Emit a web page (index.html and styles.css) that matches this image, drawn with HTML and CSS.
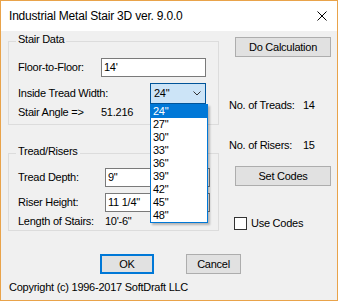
FILE: index.html
```html
<!DOCTYPE html>
<html lang="en">
<head>
    <meta charset="UTF-8">
    <title>Industrial Metal Stair 3D ver. 9.0.0</title>
    <link rel="stylesheet" href="styles.css">
</head>
<body>

    <div class="window">
        <div class="titlebar">
            <span class="title">Industrial Metal Stair 3D ver. 9.0.0</span>
            <svg class="close" width="10" height="10" viewBox="0 0 10 10">
                <path d="M0.5 0.5 L9.5 9.5 M9.5 0.5 L0.5 9.5" stroke="#000" stroke-width="1" fill="none"/>
            </svg>
        </div>

        <div class="client">
            <div class="main">
                <!-- left column start -->
                <div class="left">
                    <fieldset class="group group-stair">
                        <legend>Stair Data</legend>
                        <div class="row row-field">
                            <span class="lbl lbl-a">Floor-to-Floor:</span>
                            <div class="field field-a">14'</div>
                        </div>
                        <div class="row row-combo">
                            <span class="lbl lbl-wide">Inside Tread Width:</span>
                            <div class="combo">
                                <span class="combo-value">24"</span>
                                <svg class="chevron" width="8" height="5" viewBox="0 0 8 5">
                                    <polyline points="0.5,0.5 4,4 7.5,0.5" fill="none" stroke="#333" stroke-width="1"/>
                                </svg>
                                <ul class="combo-list">
                                    <li class="selected">24"</li>
                                    <li>27"</li>
                                    <li>30"</li>
                                    <li>33"</li>
                                    <li>36"</li>
                                    <li>39"</li>
                                    <li>42"</li>
                                    <li>45"</li>
                                    <li>48"</li>
                                </ul>
                            </div>
                        </div>
                        <div class="row row-text">
                            <span class="lbl lbl-a">Stair Angle =&gt;</span>
                            <span>51.216</span>
                        </div>
                    </fieldset>

                    <fieldset class="group group-tread">
                        <legend>Tread/Risers</legend>
                        <div class="row row-field">
                            <span class="lbl lbl-b">Tread Depth:</span>
                            <div class="field field-b">9"</div>
                        </div>
                        <div class="row row-field">
                            <span class="lbl lbl-b">Riser Height:</span>
                            <div class="field field-b">11 1/4"</div>
                        </div>
                        <div class="row row-length">
                            <span class="lbl lbl-b">Length of Stairs:</span>
                            <span>10'-6"</span>
                        </div>
                    </fieldset>
                </div>
                <!-- left column end -->

                <!-- right column start -->
                <div class="right">
                    <button class="btn btn-side">Do Calculation</button>
                    <div class="count count-treads"><span class="count-lbl">No. of Treads:</span><span>14</span></div>
                    <div class="count count-risers"><span class="count-lbl">No. of Risers:</span><span>15</span></div>
                    <button class="btn btn-side btn-codes">Set Codes</button>
                    <label class="check">
                        <span class="box"></span>
                        <span>Use Codes</span>
                    </label>
                </div>
                <!-- right column end -->
            </div>

            <div class="actions">
                <button class="btn btn-ok">OK</button>
                <button class="btn btn-cancel">Cancel</button>
            </div>

            <div class="copyright">Copyright (c) 1996-2017 SoftDraft LLC</div>
        </div>
    </div>

</body>
</html>
```

FILE: styles.css
```css
body {
    margin: 0;
    padding: 0;
    font-family: "Liberation Sans", Arial, sans-serif;
    font-size: 11px;
    color: #000;
    background: #f0f0f0;
}

.window {
    width: 338px;
    height: 301px;
    box-sizing: border-box;
    border: 1px solid #e9a34a;
    display: flex;
    flex-direction: column;
    background: #f0f0f0;
}

.titlebar {
    height: 30px;
    background: #fff;
    display: flex;
    align-items: center;
    padding-left: 8px;
}

.title {
    flex: 1;
    font-size: 12px;
    letter-spacing: -0.2px;
}

.close {
    margin-right: 10px;
}

.client {
    flex: 1;
    padding-left: 7px;
    letter-spacing: -0.25px;
}

.main {
    display: flex;
}

.left {
    width: 211px;
    padding-top: 2px;
}

/* group boxes */

.group {
    margin: 0;
    padding: 8px 0 5px 9px;
    border: 1px solid #dcdcdc;
    min-inline-size: 0;
}

.group legend {
    margin-left: -2px;
    padding: 0 2px 4px 2px;
    line-height: 13px;
}

.group-tread {
    margin-top: 20px;
    padding-top: 6px;
    padding-bottom: 1px;
}

.row {
    display: flex;
    align-items: center;
    line-height: 13px;
}

.row-field {
    height: 19px;
}

.row-field + .row-field {
    margin-top: 6px;
}

.row-combo {
    height: 21px;
    margin-top: 6px;
}

.row-text {
    height: 13px;
    margin-top: 2px;
}

.row-length {
    height: 15px;
    margin-top: 2px;
}

.lbl-a { width: 83px; }
.lbl-b { width: 87px; }
.lbl-wide { width: 132px; }

.field {
    box-sizing: border-box;
    height: 19px;
    border: 1px solid #7a7a7a;
    background: #fff;
    padding-left: 2px;
    line-height: 17px;
}

.field-a { width: 105px; }
.field-b { width: 105px; }

/* combo box with open list */

.combo {
    position: relative;
    box-sizing: border-box;
    width: 56px;
    height: 21px;
    border: 1px solid #005499;
    background: #cce4f7;
    display: flex;
    align-items: center;
    padding-left: 3px;
}

.combo-value {
    flex: 1;
}

.chevron {
    margin-right: 4px;
}

.combo-list {
    position: absolute;
    top: 20px;
    left: -1px;
    width: 58px;
    box-sizing: border-box;
    margin: 0;
    padding: 0;
    list-style: none;
    background: #fff;
    border: 1px solid #0078d7;
    box-shadow: 2px 2px 2px rgba(0, 0, 0, 0.25);
    z-index: 2;
}

.combo-list li {
    height: 13px;
    line-height: 13px;
    padding-left: 2px;
}

.combo-list li.selected {
    background: #0078d7;
    color: #fff;
}

/* right column */

.right {
    margin-left: 10px;
    padding-top: 6px;
    display: flex;
    flex-direction: column;
    align-items: flex-start;
}

.btn {
    box-sizing: border-box;
    height: 20px;
    padding: 0;
    border: 1px solid #adadad;
    background: #e1e1e1;
    font-family: inherit;
    font-size: 11px;
    letter-spacing: -0.25px;
    color: #000;
}

.btn-side {
    width: 96px;
    margin-left: 6px;
}

.count {
    display: flex;
    line-height: 13px;
}

.count-lbl {
    width: 74px;
}

.count-treads { margin-top: 42px; }
.count-risers { margin-top: 27px; }
.btn-codes { margin-top: 14px; }

.check {
    margin-top: 31px;
    margin-left: 5px;
    display: flex;
    align-items: center;
    height: 13px;
    line-height: 13px;
}

.box {
    box-sizing: border-box;
    width: 13px;
    height: 13px;
    border: 1px solid #333;
    background: #fff;
    margin-right: 4px;
}

/* bottom buttons */

.actions {
    display: flex;
    margin-top: 23px;
    margin-left: 92px;
}

.btn-ok {
    width: 54px;
    border: 2px solid #0078d7;
}

.btn-cancel {
    width: 55px;
    margin-left: 32px;
}

.copyright {
    margin-top: 7px;
    margin-left: 1px;
    line-height: 13px;
}
```
